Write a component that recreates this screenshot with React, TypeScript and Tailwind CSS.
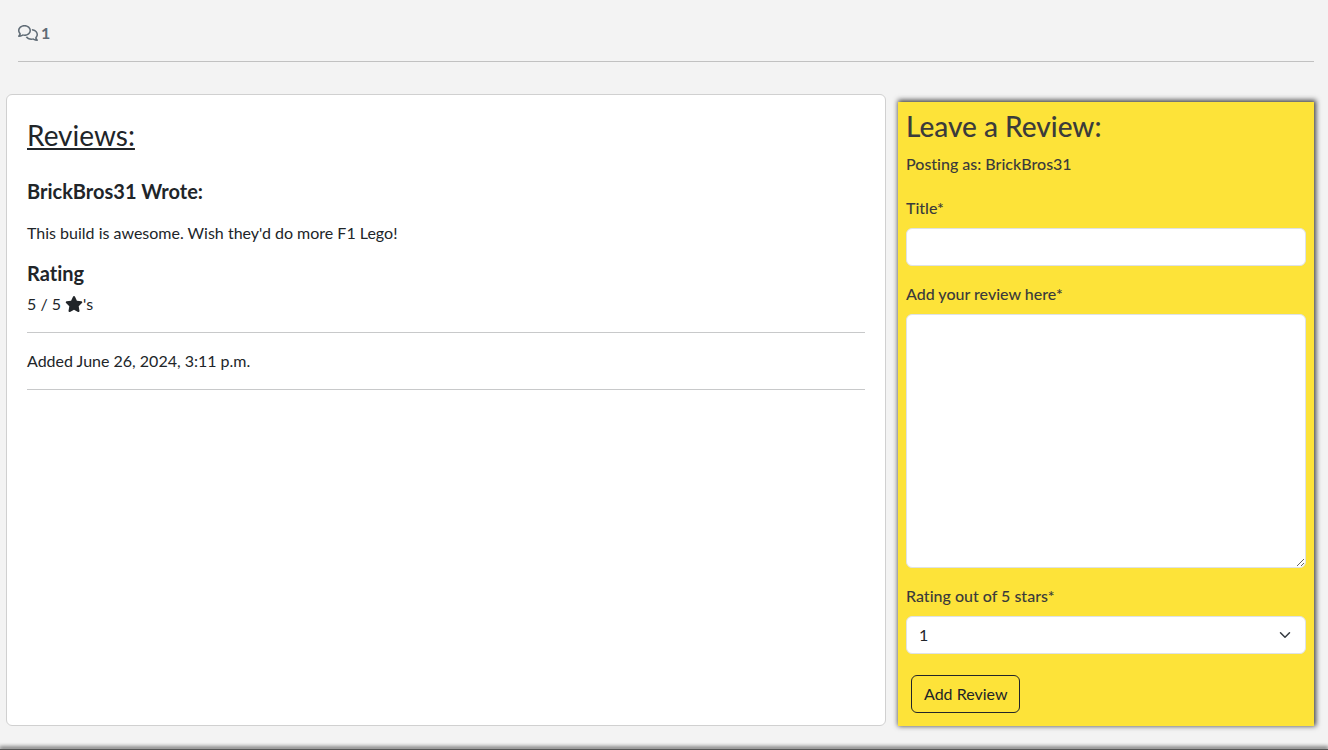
import React from "react";
import { FaRegComments, FaStar } from "react-icons/fa6";

const field =
  "block w-full rounded-md border border-[#dee2e6] bg-white px-3 text-base leading-6 font-normal text-[#212529] outline-none focus:border-[#86b7fe]";

function ReviewCard() {
  return (
    <section className="rounded-md border border-[#d0d0d0] bg-white px-5 pt-6 pb-4 text-[#212529]">
      <h2 className="text-[28px] leading-8 underline">Reviews:</h2>
      <article>
        <h3 className="mt-7 text-xl leading-6 font-bold">BrickBros31 Wrote:</h3>
        <p className="mt-[18px]">This build is awesome. Wish they'd do more F1 Lego!</p>
        <h3 className="mt-4 text-xl leading-6 font-bold">Rating</h3>
        <p className="mt-[7px]">
          5 / 5 <FaStar className="inline-block h-4 w-[18px] align-[-2px]" aria-label="star" />
          's
        </p>
        <hr className="my-4 border-[#c8c9ca]" />
        <p>Added June 26, 2024, 3:11 p.m.</p>
        <hr className="my-4 border-[#c8c9ca]" />
      </article>
    </section>
  );
}

function ReviewForm() {
  return (
    <form
      className="mt-2 bg-[#fde339] px-2 pt-2 pb-[13px] font-medium text-[#3b3b3b] shadow-[1px_-1px_5px_1px_#444]"
      onSubmit={(e) => e.preventDefault()}
    >
      <h2 className="text-[28px] leading-8">Leave a Review:</h2>
      <p className="mt-2.5">Posting as: BrickBros31</p>

      <label htmlFor="title" className="mt-5 mb-2 block">
        Title*
      </label>
      <input id="title" type="text" className={`${field} h-[38px]`} />

      <label htmlFor="body" className="mt-4 mb-2 block">
        Add your review here*
      </label>
      <textarea id="body" className={`${field} h-[254px] resize-y py-1.5`} />

      <label htmlFor="rating" className="mt-4 mb-2 block">
        Rating out of 5 stars*
      </label>
      <div className="relative">
        <select id="rating" defaultValue="1" className={`${field} h-[38px] appearance-none pr-9`}>
          {[1, 2, 3, 4, 5].map((n) => (
            <option key={n}>{n}</option>
          ))}
        </select>
        <svg
          viewBox="0 0 16 16"
          className="pointer-events-none absolute top-[13px] right-[13px] h-3 w-4"
          fill="none"
          stroke="#343a40"
          strokeWidth="2"
          strokeLinecap="round"
          strokeLinejoin="round"
          aria-hidden="true"
        >
          <path d="m2 5 6 6 6-6" />
        </svg>
      </div>

      <button
        type="submit"
        className="mt-[21px] ml-[5px] block h-[38px] rounded-md border border-[#212529] px-3 font-normal text-[#212529]"
      >
        Add Review
      </button>
    </form>
  );
}

export default function App() {
  return (
    <div className="flex min-h-screen flex-col overflow-hidden bg-[#f3f3f3] font-['Lato',sans-serif] text-base leading-6 [font-variant-ligatures:none]">
      <header className="ml-[18px] mr-3.5 flex items-center gap-[3px] border-b border-[#c1c1c1] pt-[21px] pb-4 text-[#5f6b75]">
        <FaRegComments className="h-4 w-5" aria-label="Comments" />
        <strong>1</strong>
      </header>
      <main className="mt-8 grid grid-cols-[55fr_26fr] gap-3 pr-3.5 pl-1.5">
        <ReviewCard />
        <ReviewForm />
      </main>
      <footer className="mt-[23px] h-px bg-[#555] shadow-[0_-1px_4px_1px_#444]" />
    </div>
  );
}
